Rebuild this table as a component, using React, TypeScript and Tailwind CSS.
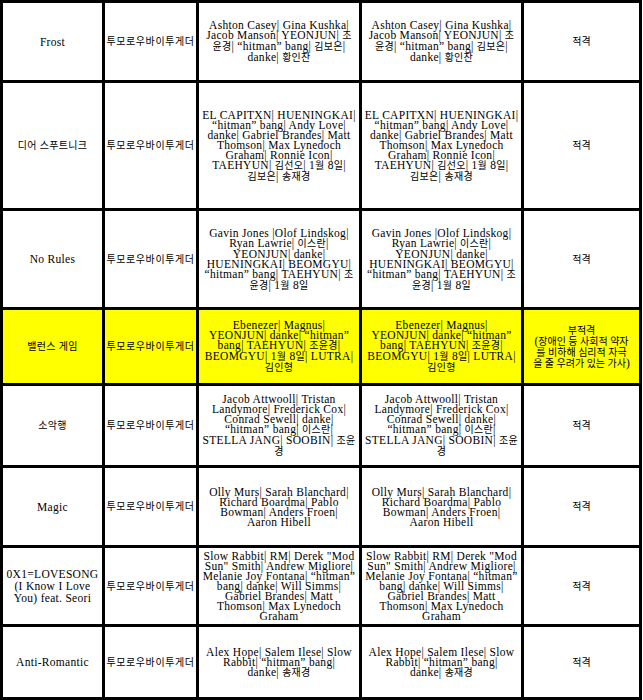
import { Fragment } from 'react';

interface Row {
  title: string[];
  credits: string[];
  result: string[];
  height: string;
  highlight?: boolean;
}

const ARTIST = '투모로우바이투게더';

const rows: Row[] = [
  {
    title: ['Frost'],
    credits: ['Ashton Casey| Gina Kushka|', 'Jacob Manson| YEONJUN| 조', '윤경| “hitman” bang| 김보은|', 'danke| 황인찬'],
    result: ['적격'],
    height: 'h-[77px]',
  },
  {
    title: ['디어 스푸트니크'],
    credits: [
      'EL CAPITXN| HUENINGKAI|',
      '“hitman” bang| Andy Love|',
      'danke| Gabriel Brandes| Matt',
      'Thomson| Max Lynedoch',
      'Graham| Ronnie Icon|',
      'TAEHYUN| 김선오| 1월 8일|',
      '김보은| 송재경',
    ],
    result: ['적격'],
    height: 'h-[125px]',
  },
  {
    title: ['No Rules'],
    credits: [
      'Gavin Jones |Olof Lindskog|',
      'Ryan Lawrie| 이스란|',
      'YEONJUN| danke|',
      'HUENINGKAI| BEOMGYU|',
      '“hitman” bang| TAEHYUN| 조',
      '윤경| 1월 8일',
    ],
    result: ['적격'],
    height: 'h-[96px]',
  },
  {
    title: ['밸런스 게임'],
    credits: ['Ebenezer| Magnus|', 'YEONJUN| danke| “hitman”', 'bang| TAEHYUN| 조윤경|', 'BEOMGYU| 1월 8일| LUTRA|', '김인형'],
    result: ['부적격', '(장애인 등 사회적 약자', '를 비하해 심리적 자극', '을 줄 우려가 있는 가사)'],
    height: 'h-[73px]',
    highlight: true,
  },
  {
    title: ['소악행'],
    credits: [
      'Jacob Attwooll| Tristan',
      'Landymore| Frederick Cox|',
      'Conrad Sewell| danke|',
      '“hitman” bang| 이스란|',
      'STELLA JANG| SOOBIN| 조윤',
      '경',
    ],
    result: ['적격'],
    height: 'h-[79px]',
  },
  {
    title: ['Magic'],
    credits: ['Olly Murs| Sarah Blanchard|', 'Richard Boardma| Pablo', 'Bowman| Anders Froen|', 'Aaron Hibell'],
    result: ['적격'],
    height: 'h-[77px]',
  },
  {
    title: ['0X1=LOVESONG', '(I Know I Love', 'You) feat. Seori'],
    credits: [
      'Slow Rabbit| RM| Derek "Mod',
      'Sun" Smith| Andrew Migliore|',
      'Melanie Joy Fontana| “hitman”',
      'bang| danke| Will Simms|',
      'Gabriel Brandes| Matt',
      'Thomson| Max Lynedoch',
      'Graham',
    ],
    result: ['적격'],
    height: 'h-[76px]',
  },
  {
    title: ['Anti-Romantic'],
    credits: ['Alex Hope| Salem Ilese| Slow', 'Rabbit| “hitman” bang|', 'danke| 송재경'],
    result: ['적격'],
    height: 'h-[70px]',
  },
];

// Hangul runs are set a bit smaller than the serif latin text
function Mixed({ text }: { text: string }) {
  const parts = text.split(/([가-힣]+(?:\s[가-힣]+)*)/);
  return (
    <>
      {parts.map((p, i) =>
        /[가-힣]/.test(p) ? (
          <span key={i} className="text-[10px]">
            {p}
          </span>
        ) : (
          <Fragment key={i}>{p}</Fragment>
        )
      )}
    </>
  );
}

function Cell({ lines, bg, className = '' }: { lines: string[]; bg: string; className?: string }) {
  return (
    <div className={`${bg} flex flex-col items-center justify-center text-center ${className}`}>
      {lines.map((l, i) => (
        <div key={i} className="whitespace-nowrap leading-[10px]">
          <Mixed text={l} />
        </div>
      ))}
    </div>
  );
}

export default function App() {
  return (
    <div
      className="w-[643px] h-[700px] overflow-hidden bg-white"
      style={{ fontFamily: "'Liberation Serif', 'Noto Sans CJK KR', serif" }}
    >
      <div className="grid w-[642px] grid-cols-[99px_91px_160px_159px_115px] gap-[3px] bg-black p-[3px] text-[11.5px] tracking-[0.3px] text-black">
        {rows.map((r, i) => {
          const bg = r.highlight ? 'bg-[#ffff00]' : 'bg-white';
          return (
            <Fragment key={i}>
              <Cell lines={r.title} bg={bg} className={`${r.height} ${r.title.length > 1 ? '[&>div]:leading-[12px]' : ''}`} />
              <Cell lines={[ARTIST]} bg={bg} className={`${r.height} tracking-[0.6px]`} />
              <Cell lines={r.credits} bg={bg} className={r.height} />
              <Cell lines={r.credits} bg={bg} className={r.height} />
              <Cell lines={r.result} bg={bg} className={`${r.height} tracking-[0px]`} />
            </Fragment>
          );
        })}
      </div>
    </div>
  );
}
